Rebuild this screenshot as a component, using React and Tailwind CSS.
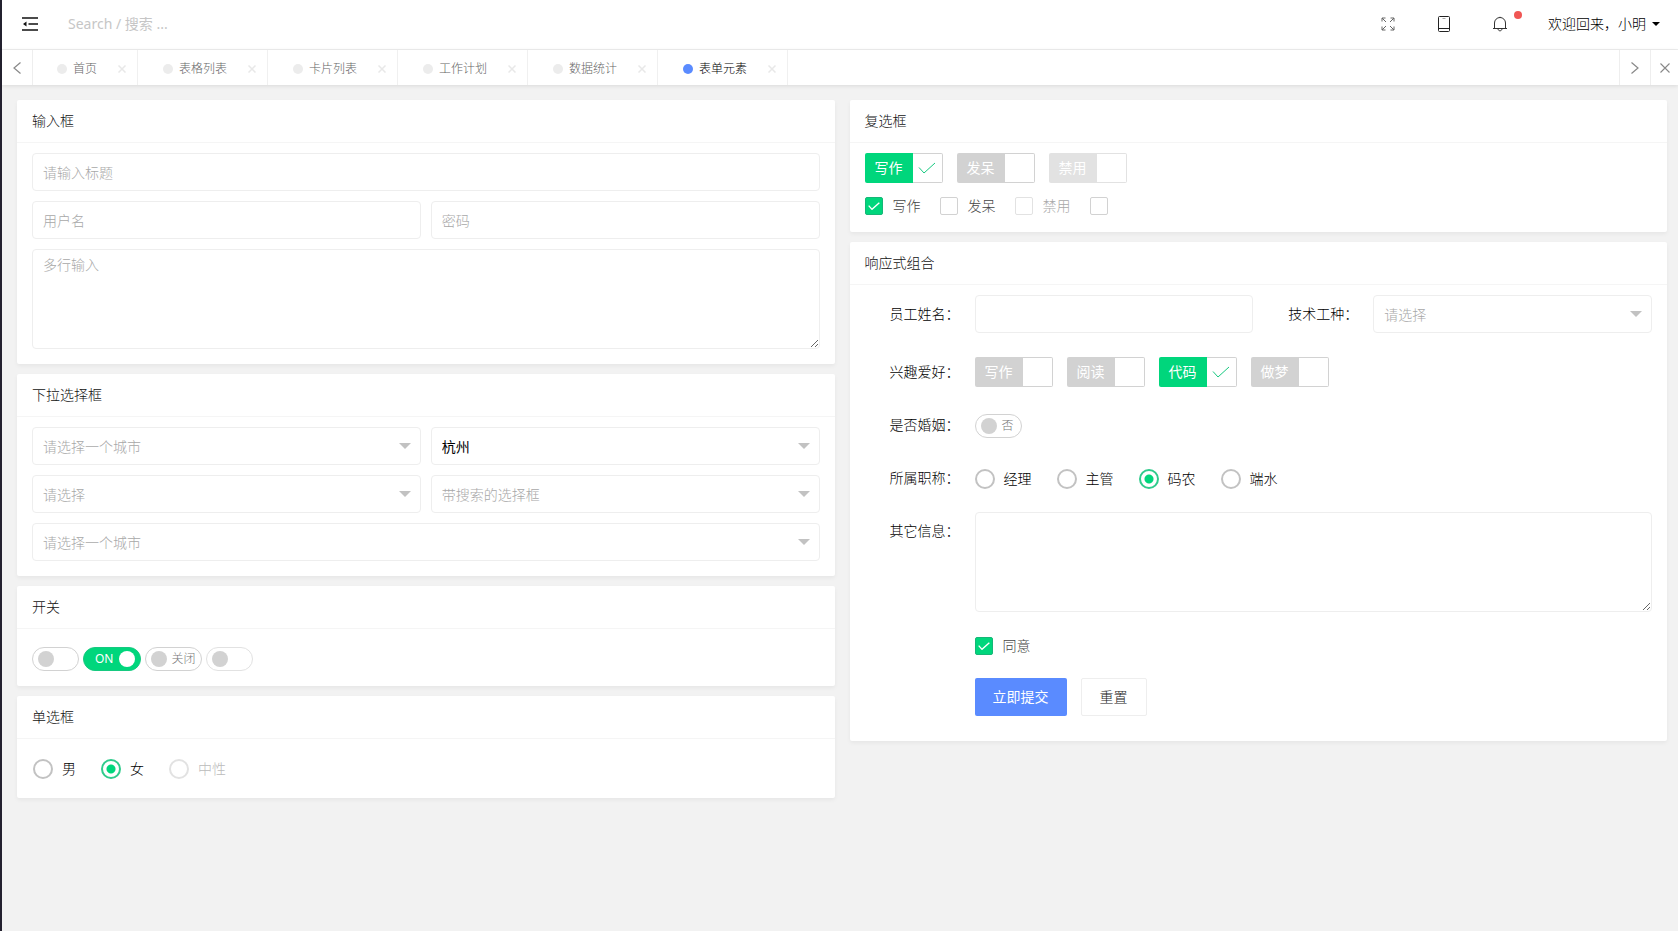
import React, { useState } from 'react';

const tabs = ['首页', '表格列表', '卡片列表', '工作计划', '数据统计', '表单元素'];

const CheckMark = ({ className }) => (
  <svg viewBox="0 0 18 12" className={className} fill="none" stroke="currentColor" aria-hidden="true">
    <path d="M1 5.5 6 11 17 1" />
  </svg>
);

const Card = ({ title, children }) => (
  <section className="bg-white rounded-xs shadow-[0_2px_4px_rgba(0,0,0,0.05)]">
    <h2 className="h-[43px] px-[15px] leading-[41px] text-[#111] border-b border-[#f5f5f5]">{title}</h2>
    {children}
  </section>
);

const TextInput = (props) => (
  <input
    {...props}
    className="block w-full h-[38px] px-2.5 bg-white border border-[#eee] rounded text-black placeholder:text-[#a8a8a8] outline-none focus:border-[#d2d2d2]"
  />
);

const TextArea = (props) => (
  <textarea
    {...props}
    className="block w-full h-[100px] px-2.5 py-[5px] leading-5 bg-white border border-[#eee] rounded placeholder:text-[#a8a8a8] outline-none resize-y focus:border-[#d2d2d2]"
  />
);

const Caret = () => (
  <svg viewBox="0 0 12 6" className="absolute right-2.5 top-4 w-3 h-1.5 text-[#c2c2c2] pointer-events-none" fill="currentColor" aria-hidden="true">
    <path d="M0 0h12L6 6z" />
  </svg>
);

const Select = ({ id, label, placeholder, options, initial = '' }) => {
  const [value, setValue] = useState(initial);

  return (
    <div className="relative">
      <select
        id={id}
        aria-label={label}
        value={value}
        onChange={(e) => setValue(e.target.value)}
        className={`block w-full h-[38px] pl-2.5 pr-8 pt-0.5 bg-white border border-[#eee] rounded appearance-none outline-none ${value ? 'font-normal text-black' : 'text-[#a8a8a8]'}`}
      >
        <option value="">{placeholder}</option>
        {options.map(option => <option key={option} value={option}>{option}</option>)}
      </select>
      <Caret />
    </div>
  );
};

// Checkbox with a filled title on the left and a tick cell on the right
const TagCheckbox = ({ label, initial = false, disabled = false }) => {
  const [checked, setChecked] = useState(initial);
  const fill = checked ? 'bg-[#00d67c]' : disabled ? 'bg-[#e2e2e2]' : 'bg-[#d2d2d2]';

  return (
    <label className="relative flex h-[30px] cursor-pointer">
      <input type="checkbox" className="sr-only" checked={checked} disabled={disabled} onChange={(e) => setChecked(e.target.checked)} />
      <span className={`w-12 text-center leading-[29px] font-normal text-white rounded-l-xs ${fill}`}>{label}</span>
      <span className={`w-[30px] flex items-center justify-center border border-l-0 rounded-r-xs ${disabled ? 'border-[#e2e2e2]' : 'border-[#d2d2d2]'}`}>
        {checked && <CheckMark className="w-[18px] h-3 text-[#16c980]" />}
      </span>
    </label>
  );
};

const PlainCheckbox = ({ label, initial = false, disabled = false }) => {
  const [checked, setChecked] = useState(initial);
  const box = checked ? 'bg-[#00d67c] border-[#16b777]' : disabled ? 'border-[#e2e2e2]' : 'border-[#d2d2d2]';

  return (
    <label className="relative flex items-center gap-2.5 h-[18px] cursor-pointer">
      <input type="checkbox" className="sr-only" aria-label={label || '默认'} checked={checked} disabled={disabled} onChange={(e) => setChecked(e.target.checked)} />
      <span className={`w-[18px] h-[18px] flex items-center justify-center border rounded-xs ${box}`}>
        {checked && <CheckMark className="w-3 h-2 stroke-2 text-white" />}
      </span>
      {label && <span className={disabled ? 'text-[#a8a8a8]' : 'text-[#444]'}>{label}</span>}
    </label>
  );
};

const Radio = ({ name, label, checked, disabled = false, onChange }) => (
  <label className={`flex items-center gap-[9px] h-5 cursor-pointer ${disabled ? 'text-[#bbb]' : 'text-black'}`}>
    <input
      type="radio"
      name={name}
      checked={checked}
      disabled={disabled}
      onChange={onChange}
      className="w-5 h-5 appearance-none rounded-full border-2 border-[#c2c2c2] checked:border-[#30cb8c] checked:bg-[radial-gradient(circle,#00d67c_4px,transparent_5px)] disabled:border-[#e2e2e2]"
    />
    {label}
  </label>
);

const RadioGroup = ({ name, options, initial }) => {
  const [value, setValue] = useState(initial);

  return (
    <div className="flex gap-[25px]">
      {options.map(option => (
        <Radio
          key={option.label}
          name={name}
          label={option.label}
          disabled={option.disabled}
          checked={value === option.label}
          onChange={() => setValue(option.label)}
        />
      ))}
    </div>
  );
};

const Switch = ({ name, initial = false, disabled = false, onText, offText }) => {
  const [on, setOn] = useState(initial);
  const text = on ? onText : offText;

  return (
    <button
      type="button"
      role="switch"
      aria-label={name}
      aria-checked={on}
      disabled={disabled}
      onClick={() => setOn(!on)}
      className={`flex items-center gap-[5px] h-6 min-w-[47px] border rounded-full text-xs ${on ? 'flex-row-reverse pl-[11px] pr-[5px] bg-[#00d67c] border-[#16c980] font-normal text-white' : 'pl-[5px] pr-[5px] bg-white text-[#777]'} ${!on && (disabled ? 'border-[#e2e2e2]' : 'border-[#d2d2d2]')}`}
    >
      <span className={`w-4 h-4 rounded-full ${on ? 'bg-white' : 'bg-[#d2d2d2]'}`}></span>
      {text && <span>{text}</span>}
    </button>
  );
};

const FormRow = ({ label, htmlFor, children }) => (
  <div className="flex">
    <label htmlFor={htmlFor} className="w-[110px] shrink-0 pr-[15px] text-right leading-[37px] text-black">{label}</label>
    <div className="flex-1 min-w-0">{children}</div>
  </div>
);

const Header = () => (
  <header className="flex items-center h-[50px] pl-5 pr-[18px] pb-0.5 bg-white border-b border-[#eee]">
    <button type="button" aria-label="收起菜单" className="mr-[30px]">
      <svg viewBox="0 0 16 14" className="w-4 h-3.5 text-[#111]" fill="none" stroke="currentColor" strokeWidth="1.4">
        <path d="M0 1h16M6.500 7H16M0 13h16" />
        <path d="M4.500 4.500v5L1 7z" fill="currentColor" stroke="none" />
      </svg>
    </button>
    <input type="search" aria-label="搜索" placeholder="Search / 搜索 ..." className="w-60 font-normal outline-none placeholder:text-[#c6c6c6]" />
    <div className="ml-auto flex items-center">
      <button type="button" aria-label="全屏" className="mr-[42px]">
        <svg viewBox="0 0 14 14" className="w-3.5 h-3.5 text-[#666]" fill="none" stroke="currentColor">
          <path d="M1 4.500V1h3.500M1 1l4 4M9.500 1H13v3.500M13 1 9 5M1 9.500V13h3.500M1 13l4-4M13 9.500V13H9.500M13 13 9 9" />
        </svg>
      </button>
      <button type="button" aria-label="手机预览" className="mr-[41px]">
        <svg viewBox="0 0 14 16" className="w-3.5 h-4 text-[#222]" fill="none" stroke="currentColor">
          <rect x="1.500" y=".5" width="11" height="15" rx="1" />
          <path d="M1.500 12.500h11" />
          <path d="M5.500 2.500h3" strokeOpacity=".4" />
        </svg>
      </button>
      <button type="button" aria-label="消息" className="relative mr-10">
        <svg viewBox="0 0 16 16" className="w-4 h-4 text-[#333]" fill="none" stroke="currentColor">
          <path d="M1 12.500h14M2.500 12.500V7a5.500 5.500 0 0 1 11 0v5.500M8 1.500V.8M6 13c.3 1.300 1 1.800 2 1.800s1.700-.5 2-1.800" />
        </svg>
        <span className="absolute -top-[5px] left-[22px] w-2 h-2 rounded-full bg-[#f05654]"></span>
      </button>
      <button type="button" className="flex items-center gap-1.5 text-black">
        欢迎回来，小明
        <svg viewBox="0 0 8 4" className="w-2 h-1" fill="currentColor" aria-hidden="true">
          <path d="M0 0h8L4 4z" />
        </svg>
      </button>
    </div>
  </header>
);

const TabBar = () => {
  const [active, setActive] = useState('表单元素');

  return (
    <nav className="relative flex h-[35px] bg-white text-xs shadow-[0_1px_4px_rgba(0,0,0,0.1)]">
      <button type="button" aria-label="上一页" className="w-[31px] flex items-center justify-center border-r border-[#eee] text-[#888]">
        <svg viewBox="0 0 8 12" className="w-2 h-3" fill="none" stroke="currentColor" strokeWidth="1.200"><path d="M7.500.5 1 6l6.500 5.500" /></svg>
      </button>
      {tabs.map((tab, index) => (
        <div key={tab} className={`flex items-center pr-[7px] pt-0.5 border-r border-[#f0f0f0] ${index === 0 ? 'pl-6' : 'pl-[25px]'}`}>
          <button
            type="button"
            onClick={() => setActive(tab)}
            className={`flex items-center gap-1.5 mr-[17px] ${tab === active ? 'text-black' : 'text-[#666]'}`}
          >
            <span className={`w-2.5 h-2.5 rounded-full ${tab === active ? 'bg-[#5a8bff]' : 'bg-[#ececec]'}`}></span>
            {tab}
          </button>
          <button type="button" aria-label={`关闭${tab}`} className="w-4 flex justify-center text-[#e8e8e8]">
            <svg viewBox="0 0 8 8" className="w-2 h-2" fill="none" stroke="currentColor" strokeWidth="1.500"><path d="m.5.5 7 7M7.500.5l-7 7" /></svg>
          </button>
        </div>
      ))}
      <button type="button" aria-label="下一页" className="ml-auto w-[31px] flex items-center justify-center border-l border-[#eee] text-[#888]">
        <svg viewBox="0 0 8 12" className="w-2 h-3" fill="none" stroke="currentColor" strokeWidth="1.200"><path d="M.5.5 7 6 .5 11.500" /></svg>
      </button>
      <button type="button" aria-label="关闭标签" className="w-7 flex items-center justify-center border-l border-[#eee] text-[#888]">
        <svg viewBox="0 0 10 10" className="w-2.5 h-2.5" fill="none" stroke="currentColor" strokeWidth="1.100"><path d="m.5.5 9 9M9.500.5l-9 9" /></svg>
      </button>
    </nav>
  );
};

const App = () => {
  return (
    <div className="min-h-screen bg-[#f2f2f2] border-l-2 border-[#23212f] text-sm font-light font-['Noto_Sans','Noto_Sans_CJK_SC',sans-serif]">
      <Header />
      <TabBar />

      <main className="grid grid-cols-2 items-start gap-[15px] pl-[15px] pr-[11px] pt-[15px]">
        {/* Left column */}
        <div className="flex flex-col gap-2.5">
          <Card title="输入框">
            <div className="grid grid-cols-2 gap-2.5 px-[15px] pt-2.5 pb-[15px]">
              <div className="col-span-2"><TextInput type="text" aria-label="标题" placeholder="请输入标题" /></div>
              <TextInput type="text" aria-label="用户名" placeholder="用户名" />
              <TextInput type="password" aria-label="密码" placeholder="密码" />
              <div className="col-span-2"><TextArea aria-label="多行输入" placeholder="多行输入" /></div>
            </div>
          </Card>

          <Card title="下拉选择框">
            <div className="grid grid-cols-2 gap-2.5 px-[15px] pt-2.5 pb-[15px]">
              <Select label="城市" placeholder="请选择一个城市" options={['北京', '上海', '杭州']} />
              <Select label="默认城市" placeholder="请选择" options={['北京', '上海', '杭州']} initial="杭州" />
              <Select label="分组选择" placeholder="请选择" options={['写作', '阅读']} />
              <Select label="搜索选择" placeholder="带搜索的选择框" options={['写作', '阅读']} />
              <div className="col-span-2">
                <Select label="所在城市" placeholder="请选择一个城市" options={['北京', '上海', '杭州']} />
              </div>
            </div>
          </Card>

          <Card title="开关">
            <div className="flex gap-1 px-[15px] pt-[18px] pb-[15px]">
              <Switch name="默认开关" />
              <Switch name="开启" initial={true} onText="ON" offText="OFF" />
              <Switch name="关闭" onText="开启" offText="关闭" />
              <Switch name="禁用开关" disabled={true} />
            </div>
          </Card>

          <Card title="单选框">
            <div className="px-4 pt-5 pb-[19px]">
              <RadioGroup name="sex" initial="女" options={[{ label: '男' }, { label: '女' }, { label: '中性', disabled: true }]} />
            </div>
          </Card>
        </div>

        {/* Right column */}
        <div className="flex flex-col gap-2.5">
          <Card title="复选框">
            <div className="flex flex-col gap-3.5 px-[15px] pt-2.5 pb-[17px]">
              <div className="flex gap-3.5">
                <TagCheckbox label="写作" initial={true} />
                <TagCheckbox label="发呆" />
                <TagCheckbox label="禁用" disabled={true} />
              </div>
              <div className="flex gap-[19px]">
                <PlainCheckbox label="写作" initial={true} />
                <PlainCheckbox label="发呆" />
                <PlainCheckbox label="禁用" disabled={true} />
                <PlainCheckbox />
              </div>
            </div>
          </Card>

          <Card title="响应式组合">
            <form className="flex flex-col gap-[15px] px-[15px] pt-2.5 pb-[25px]" onSubmit={(e) => e.preventDefault()}>
              <div className="grid grid-cols-2 gap-2.5 pb-[5px]">
                <FormRow label="员工姓名：" htmlFor="fullname"><TextInput id="fullname" type="text" /></FormRow>
                <FormRow label="技术工种：" htmlFor="job"><Select id="job" placeholder="请选择" options={['前端工程师', 'Node.js工程师']} /></FormRow>
              </div>
              <FormRow label="兴趣爱好：">
                <div className="flex gap-3.5 h-[38px] items-center">
                  <TagCheckbox label="写作" />
                  <TagCheckbox label="阅读" />
                  <TagCheckbox label="代码" initial={true} />
                  <TagCheckbox label="做梦" />
                </div>
              </FormRow>
              <FormRow label="是否婚姻：">
                <div className="flex items-center h-[38px] pt-0.5"><Switch name="是否婚姻" onText="是" offText="否" /></div>
              </FormRow>
              <FormRow label="所属职称：">
                <div className="flex items-center h-[38px] pt-0.5">
                  <RadioGroup name="title" initial="码农" options={[{ label: '经理' }, { label: '主管' }, { label: '码农' }, { label: '端水' }]} />
                </div>
              </FormRow>
              <FormRow label="其它信息：" htmlFor="remark"><TextArea id="remark" /></FormRow>
              <div className="flex flex-col gap-[23px] pt-2.5 pl-[110px]">
                <div className="flex"><PlainCheckbox label="同意" initial={true} /></div>
                <div className="flex gap-3.5">
                  <button type="submit" className="h-[38px] px-[18px] bg-[#5a8bff] font-normal text-white rounded-xs">立即提交</button>
                  <button type="reset" className="h-[38px] px-[18px] bg-white border border-[#eee] text-[#222] rounded-xs">重置</button>
                </div>
              </div>
            </form>
          </Card>
        </div>
      </main>
    </div>
  );
};

export default App;
